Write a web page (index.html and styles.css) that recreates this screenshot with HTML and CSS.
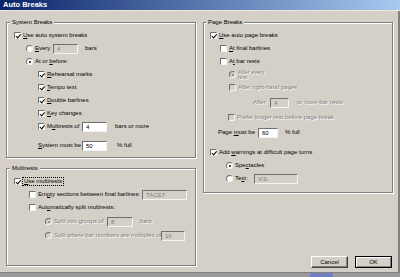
FILE: index.html
```html
<!DOCTYPE html>
<html>
<head>
<meta charset="utf-8">
<link rel="stylesheet" href="styles.css">
</head>
<body>
<div class="window">
  <div class="titlebar">Auto Breaks</div>
  <div class="content">
    <div class="col">
      <fieldset class="group g-system">
        <legend>System Breaks</legend>
        <div class="row"><span class="cb on"></span><span><u>U</u>se auto system breaks</span></div>
        <div class="row i12"><span class="rb"></span><span class="w16"><u>E</u>very</span><span class="input dis w25">4</span><span class="ml5">bars</span></div>
        <div class="row i12"><span class="rb on"></span><span>At or <u>b</u>efore:</span></div>
        <div class="row i24"><span class="cb on"></span><span><u>R</u>ehearsal marks</span></div>
        <div class="row i24"><span class="cb on"></span><span><u>T</u>empo text</span></div>
        <div class="row i24"><span class="cb on"></span><span><u>D</u>ouble barlines</span></div>
        <div class="row i24"><span class="cb on"></span><span><u>K</u>ey changes</span></div>
        <div class="row i24"><span class="cb on"></span><span class="w33">M<u>u</u>ltirests of</span><span class="input w25">4</span><span class="ml6">bars or more</span></div>
        <div class="row i24 mt6"><span class="w42"><u>S</u>ystem must be</span><span class="input w25">50</span><span class="ml8">% full</span></div>
      </fieldset>
      <fieldset class="group g-multi">
        <legend>Multirests</legend>
        <div class="row"><span class="cb on"></span><span class="focus"><u>U</u>se multirests</span></div>
        <div class="row i15"><span class="cb"></span><span class="w102">Em<u>p</u>ty sections between final barlines:</span><span class="input dis w45">TACET</span></div>
        <div class="row i15"><span class="cb"></span><span>Aut<u>o</u>matically split multirests:</span></div>
        <div class="row i31 mt1"><span class="rb on dis"></span><span class="w51 dis">Split into groups of</span><span class="input dis w26">8</span><span class="ml5 dis">bars</span></div>
        <div class="row i31 mt1"><span class="rb dis"></span><span class="w105 dis">Split where bar numbers are multiples of</span><span class="input dis w24">16</span></div>
      </fieldset>
    </div>
    <div class="col">
      <fieldset class="group g-page">
        <legend>Page Breaks</legend>
        <div class="row"><span class="cb on"></span><span><u>U</u>se auto page breaks</span></div>
        <div class="row i10"><span class="cb"></span><span><u>A</u>t final barlines</span></div>
        <div class="row i10"><span class="cb"></span><span>A<u>t</u> bar rests</span></div>
        <div class="row i19"><span class="rb on dis"></span><span class="wrap dis">After every<br>rest</span></div>
        <div class="row i19"><span class="cb dis"></span><span class="dis">After right-hand pages</span></div>
        <div class="row i43 mt2"><span class="w15 dis">After</span><span class="input dis w19">4</span><span class="ml6 dis">or more bar rests</span></div>
        <div class="row i18 mt2"><span class="cb dis"></span><span class="dis">Prefer longer rest before page break</span></div>
        <div class="row i8 mt2"><span class="w38">Page <u>m</u>ust be</span><span class="input w20">60</span><span class="ml5">% full</span></div>
        <div class="row mt7"><span class="cb on"></span><span>Add <u>w</u>arnings at difficult page turns</span></div>
        <div class="row i16"><span class="rb on"></span><span>Spe<u>c</u>tacles</span></div>
        <div class="row i16"><span class="rb"></span><span class="w17">Te<u>x</u>t:</span><span class="input dis w44">V.S.</span></div>
      </fieldset>
      <div class="buttons">
        <button class="btn">Cancel</button>
        <button class="btn default">OK</button>
      </div>
    </div>
  </div>
  <div class="edge"><span class="edge-blue"></span></div>
</div>
</body>
</html>
```
FILE: styles.css
```css
html, body {
  margin: 0;
  padding: 0;
  background: #d4d0c8;
}
body {
  font-family: "Liberation Sans", Arial, sans-serif;
  font-size: 6px;
  color: #000;
}
.window {
  width: 400px;
  height: 277px;
  background: #d4d0c8;
  display: flex;
  flex-direction: column;
  overflow: hidden;
  box-shadow: inset -2px 0 0 #808080;
}
.titlebar {
  height: 10px;
  line-height: 10px;
  padding-left: 3px;
  background: linear-gradient(to right, #0a246a, #a6caf0);
  color: #fff;
  font-weight: bold;
  font-size: 7.5px;
  border-bottom: 1px solid #ece9e2;
}
.content {
  display: grid;
  grid-template-columns: 190px 190px;
  grid-template-rows: 249px;
  column-gap: 7px;
  padding: 8px 0 0 6px;
}
.col {
  display: flex;
  flex-direction: column;
}
.group {
  margin: 0;
  padding: 3px 4px 0 7px;
  border: 1px solid #808080;
  box-shadow: inset 1px 1px 0 #fff, 1px 1px 0 #fff;
  box-sizing: border-box;
  min-width: 0;
}
.group legend {
  font-size: 6px;
  line-height: 7px;
  padding: 0 2px;
  margin-left: -4px;
  background: #d4d0c8;
}
.g-system { height: 139px; }
.g-multi { height: 101px; margin-top: 7px; }
.g-page { height: 174px; padding-left: 6px; }

.row {
  display: flex;
  align-items: center;
  gap: 2px;
  height: 13px;
  white-space: nowrap;
  line-height: 7px;
}
.i8 { padding-left: 8px; }
.i10 { padding-left: 10px; }
.i12 { padding-left: 12px; }
.i15 { padding-left: 15px; }
.i16 { padding-left: 16px; }
.i18 { padding-left: 18px; }
.i19 { padding-left: 19px; }
.i24 { padding-left: 24px; }
.i31 { padding-left: 31px; }
.i43 { padding-left: 43px; }
.mt1 { margin-top: 1px; }
.mt2 { margin-top: 2px; }
.mt6 { margin-top: 6px; }
.mt7 { margin-top: 7px; }
.ml5 { margin-left: 5px; }
.ml6 { margin-left: 6px; }
.ml8 { margin-left: 8px; }
.w15 { width: 15px; }
.w16 { width: 16px; }
.w17 { width: 17px; }
.w33 { width: 33px; }
.w38 { width: 38px; }
.w42 { width: 42px; }
.w51 { width: 51px; }
.w102 { width: 102px; }
.w105 { width: 105px; }

.cb, .rb {
  flex: none;
  width: 7px;
  height: 7px;
  box-sizing: border-box;
  border: 1px solid;
  border-color: #707070 #f4f4f4 #f4f4f4 #707070;
  background: #fff;
  position: relative;
}
.cb.on::after {
  content: "";
  position: absolute;
  left: 1.5px;
  top: -0.5px;
  width: 1.5px;
  height: 3.5px;
  border: solid #000;
  border-width: 0 1.2px 1.2px 0;
  transform: rotate(40deg);
}
.rb {
  border-radius: 50%;
  display: flex;
  align-items: center;
  justify-content: center;
}
.rb.on::after {
  content: "";
  width: 2px;
  height: 2px;
  border-radius: 50%;
  background: #000;
}
.cb.dis, .rb.dis {
  background: #d4d0c8;
}
.rb.on.dis::after {
  background: #808080;
}
.dis {
  color: #808080;
  text-shadow: 1px 1px 0 #fff;
}
.wrap {
  white-space: normal;
  font-size: 5.5px;
  line-height: 4.5px;
}
.focus {
  outline: 1px dotted #000;
  padding: 0 1px;
}

.input {
  flex: none;
  height: 10px;
  box-sizing: border-box;
  border: 1px solid;
  border-color: #707070 #f4f4f4 #f4f4f4 #707070;
  background: #fff;
  padding-left: 3px;
  font-size: 6px;
  line-height: 8px;
  color: #000;
}
.input.dis {
  background: #d4d0c8;
  color: #808080;
  text-shadow: none;
}
.w19 { width: 19px; }
.w20 { width: 20px; }
.w24 { width: 24px; }
.w25 { width: 25px; }
.w26 { width: 26px; }
.w44 { width: 44px; }
.w45 { width: 45px; }

.buttons {
  margin-top: auto;
  display: flex;
  justify-content: flex-end;
  gap: 7px;
  padding-right: 1px;
}
.btn {
  width: 37px;
  height: 12px;
  padding: 0;
  box-sizing: border-box;
  font-family: "Liberation Sans", Arial, sans-serif;
  font-size: 6px;
  color: #000;
  background: #d4d0c8;
  border: 1px solid;
  border-color: #fff #404040 #404040 #fff;
  box-shadow: inset -1px -1px 0 #808080;
}
.btn.default {
  border-color: #000;
  box-shadow: inset 1px 1px 0 #fff, inset -1px -1px 0 #808080;
}
.edge {
  margin-top: auto;
  height: 4px;
  border-top: 1px solid #808080;
  background: #9a9a9a;
  display: flex;
}
.edge-blue {
  margin-left: 310px;
  width: 23px;
  background: #7080c0;
}
```
